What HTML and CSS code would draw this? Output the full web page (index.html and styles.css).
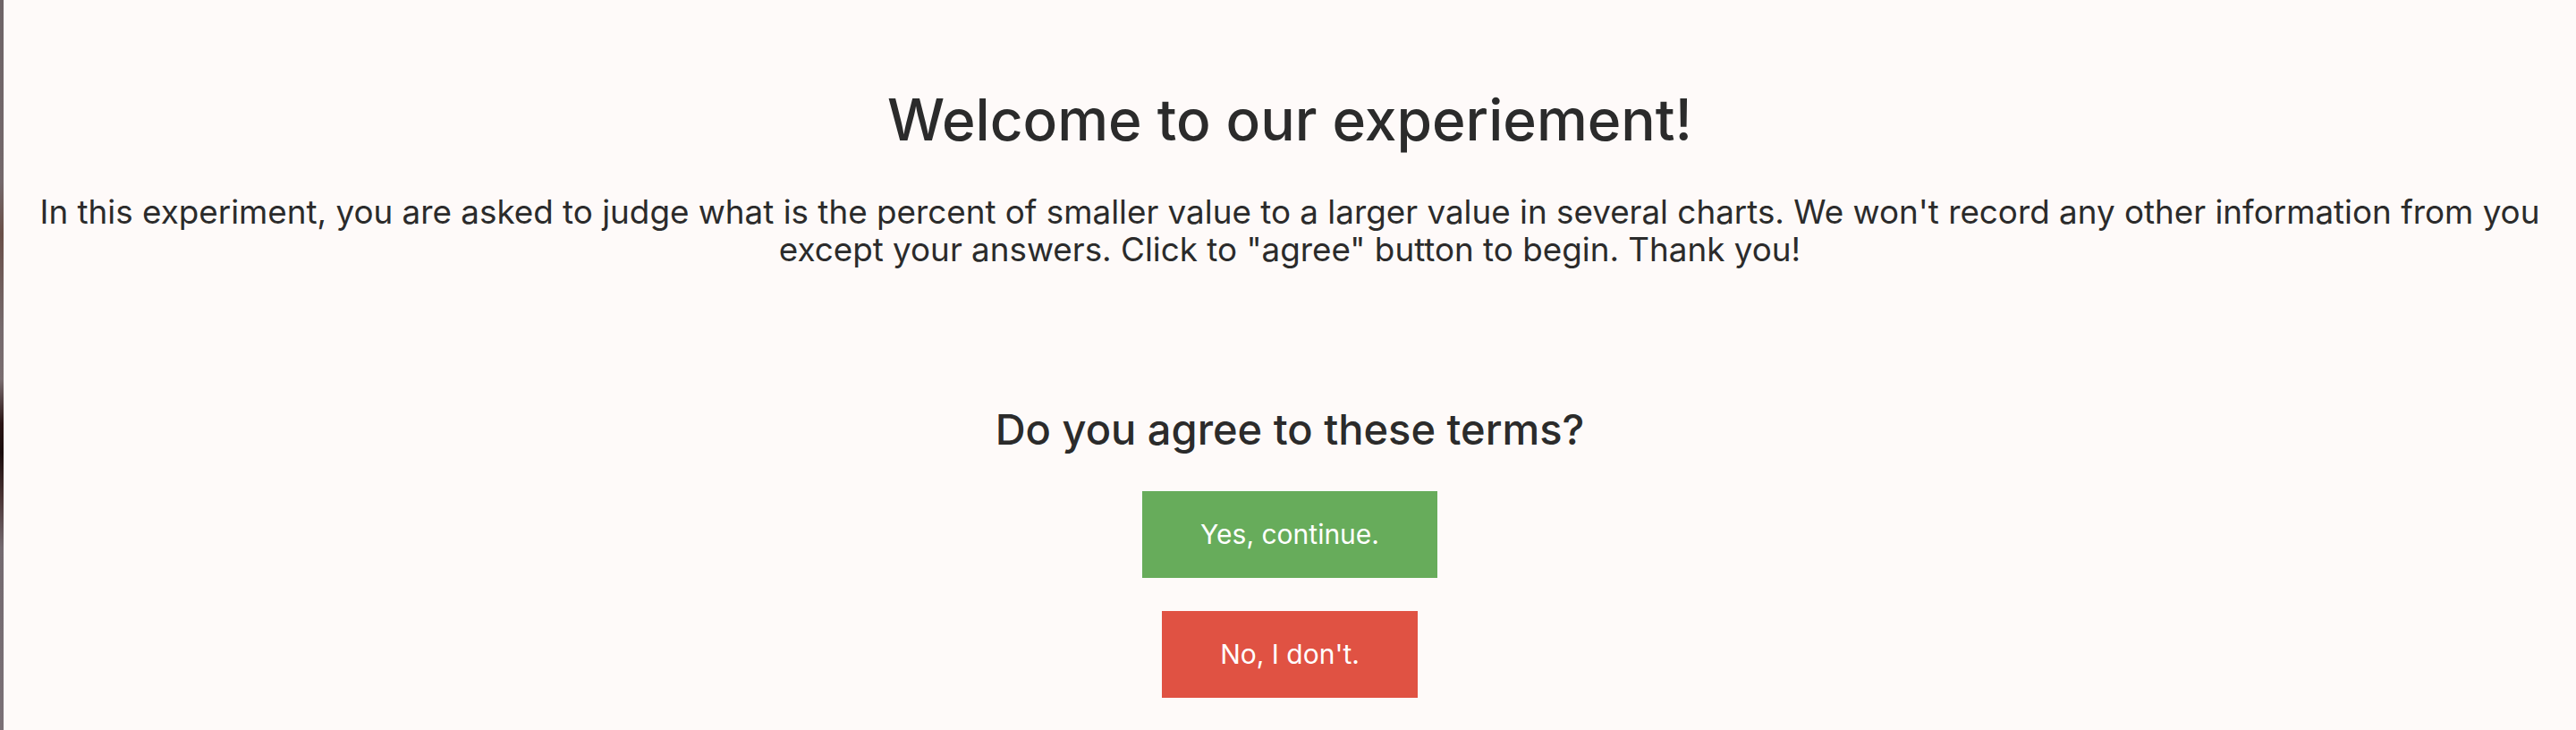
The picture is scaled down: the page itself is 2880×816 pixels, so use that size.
FILE: index.html
```html
<!DOCTYPE html>
<html lang="en">
<head>
<meta charset="utf-8">
<title>Welcome</title>
<link rel="stylesheet" href="styles.css">
</head>
<body>
<div class="edge"></div>
<main class="page">
  <h1 class="title">Welcome to our experiement!</h1>
  <p class="intro">In this experiment, you are asked to judge what is the percent of smaller value to a larger value in several charts. We won't record any other information from you except your answers. Click to "agree" button to begin. Thank you!</p>
  <h2 class="question">Do you agree to these terms?</h2>
  <div class="actions">
    <button class="btn btn-yes">Yes, continue.</button>
    <button class="btn btn-no">No, I don't.</button>
  </div>
</main>
</body>
</html>
```
FILE: styles.css
```css
html, body { margin: 0; padding: 0; }
body {
  background: #fefaf9;
  color: #2b2b2b;
  font-family: Inter, "Open Sans", sans-serif;
  display: flex;
  min-height: 816px;
}
.edge {
  width: 4px;
  flex: none;
  background: linear-gradient(to bottom, #6e6467 0%, #74686b 25%, #6a4f48 32%, #766a6d 45%, #7a6d70 52%, #2a1414 58%, #1a0c0c 62%, #4a3434 68%, #746a70 75%, #7a7076 100%);
}
.page {
  flex: 1;
  display: flex;
  flex-direction: column;
  align-items: center;
  text-align: center;
  padding: 0 20px;
}
.title { font-size: 64px; font-weight: 500; margin: 96px 0 0; line-height: 1.2; }
.intro { font-size: 36.8px; font-weight: 400; margin: 43px 0 0; line-height: 42px; }
.question { font-size: 47px; font-weight: 500; margin: 152px 0 0; line-height: 1.2; }
.actions { display: flex; flex-direction: column; align-items: center; gap: 37px; margin-top: 41px; }
.btn {
  border: 0;
  color: #fff;
  font-family: inherit;
  font-size: 30px;
  font-weight: 400;
  line-height: 37px;
  padding: 30px 65px;
}
.btn-yes { background: #67ac5b; }
.btn-no { background: #e05243; }
```
